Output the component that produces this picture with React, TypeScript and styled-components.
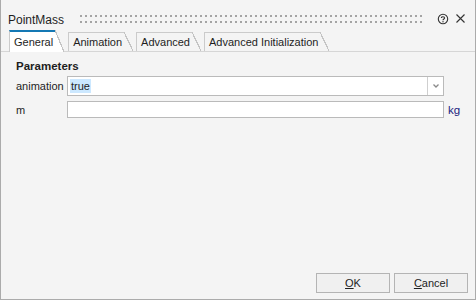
import React from "react";
import styled, { createGlobalStyle } from "styled-components";

const Global = createGlobalStyle`
  html, body { margin: 0; padding: 0; background: #f4f4f4; }
  body { font-family: "Liberation Sans", Arial, sans-serif; }
`;

const Window = styled.div`
  width: 476px;
  height: 300px;
  box-sizing: border-box;
  border-left: 1px solid #ababab;
  border-right: 1px solid #ababab;
  border-bottom: 1px solid #ababab;
  background: #f4f4f4;
  display: flex;
  flex-direction: column;
  font-size: 11px;
  color: #1e1e1e;
`;

const TitleBar = styled.div`
  height: 30px;
  display: flex;
  align-items: center;
  padding: 9px 8px 0 7px;
  box-sizing: border-box;
`;

const Title = styled.div`
  font-size: 12px;
  line-height: 14px;
  color: #1e1e1e;
  margin-right: 16px;
`;

const Grip = styled.div`
  flex: 1;
  height: 8px;
  margin-top: -2px;
  background-image: conic-gradient(from 270deg at 2px 2px, #a4a4a4 25%, transparent 0);
  background-size: 5px 6px;
  margin-right: 8px;
`;

const IconBtn = styled.div`
  width: 14px;
  height: 14px;
  display: flex;
  align-items: center;
  justify-content: center;
  margin-left: 3px;
  margin-top: -2px;
`;

const TabStrip = styled.div`
  display: flex;
  align-items: flex-end;
  height: 22px;
  padding-left: 8px;
  border-bottom: 1px solid #d6d6d6;
  box-sizing: border-box;
`;

const Tab = styled.div<{ $active?: boolean }>`
  position: relative;
  height: ${(p) => (p.$active ? 22 : 19)}px;
  box-sizing: border-box;
  padding: 0 2px 0 4px;
  margin-right: ${(p) => (p.$active ? 13 : 12)}px;
  margin-bottom: ${(p) => (p.$active ? -1 : 0)}px;
  display: flex;
  align-items: center;
  font-size: 11px;
  color: #1e1e1e;
  background: ${(p) => (p.$active ? "#ffffff" : "#f4f4f4")};
  border-left: 1px solid #cbcbcb;
  border-top: ${(p) => (p.$active ? "2px solid #1478b4" : "1px solid #cbcbcb")};
  z-index: ${(p) => (p.$active ? 2 : 1)};

  &::after {
    content: "";
    position: absolute;
    top: ${(p) => (p.$active ? -2 : -1)}px;
    right: -9px;
    width: 9px;
    height: calc(100% + ${(p) => (p.$active ? 2 : 1)}px);
    background: linear-gradient(
      to top right,
      ${(p) => (p.$active ? "#ffffff" : "#f4f4f4")} calc(50% - 0.6px),
      #c4c4c4 calc(50% - 0.6px),
      #c4c4c4 calc(50% + 0.6px),
      transparent calc(50% + 0.6px)
    );
  }
`;

const Body = styled.div`
  flex: 1;
  display: flex;
  flex-direction: column;
  padding: 8px 0 0 15px;
`;

const Section = styled.div`
  font-weight: bold;
  font-size: 11.5px;
  line-height: 13px;
  margin-bottom: 3px;
`;

const Row = styled.div<{ $h: number }>`
  display: flex;
  align-items: center;
  height: ${(p) => p.$h}px;
  margin-bottom: 5px;
`;

const Label = styled.div`
  width: 51px;
  font-size: 11px;
`;

const Field = styled.div<{ $h: number }>`
  width: 377px;
  height: ${(p) => p.$h}px;
  box-sizing: border-box;
  border: 1px solid #bababa;
  background: #fff;
  display: flex;
  align-items: center;
  padding-left: 2px;
`;

const Selected = styled.span`
  background: #cce8ff;
  padding: 0 1px;
  line-height: 14px;
`;

const Spacer = styled.div`
  flex: 1;
`;

const DropBtn = styled.div`
  width: 15px;
  height: 100%;
  border-left: 1px solid #cfcfcf;
  display: flex;
  align-items: center;
  justify-content: center;
`;

const Unit = styled.div`
  margin-left: 4px;
  color: #1a237e;
  font-size: 11.5px;
`;

const Footer = styled.div`
  display: flex;
  justify-content: flex-end;
  gap: 4px;
  padding: 0 7px 6px 0;
`;

const Button = styled.button`
  width: 74px;
  height: 20px;
  border: 1px solid #b4b4b4;
  background: #f0f0f0;
  font-family: inherit;
  font-size: 11px;
  color: #1e1e1e;
  padding: 0;
  display: flex;
  align-items: center;
  justify-content: center;
`;

const tabs = ["General", "Animation", "Advanced", "Advanced Initialization"];

export default function App() {
  return (
    <>
      <Global />
      <Window>
        <TitleBar>
          <Title>PointMass</Title>
          <Grip />
          <IconBtn>
            <svg width="12" height="12" viewBox="0 0 12 12">
              <circle cx="6" cy="6" r="4.7" fill="none" stroke="#333" strokeWidth="1.1" />
              <path d="M4.4 4.9 C4.4 3.4 7.6 3.4 7.6 4.9 C7.6 6 6 5.9 6 7.2" fill="none" stroke="#333" strokeWidth="1.1" />
              <circle cx="6" cy="8.7" r="0.7" fill="#333" />
            </svg>
          </IconBtn>
          <IconBtn>
            <svg width="11" height="11" viewBox="0 0 11 11">
              <path d="M1.5 1.5 L9.5 9.5 M9.5 1.5 L1.5 9.5" stroke="#333" strokeWidth="1.1" />
            </svg>
          </IconBtn>
        </TitleBar>
        <TabStrip>
          {tabs.map((t, i) => (
            <Tab key={t} $active={i === 0}>
              {t}
            </Tab>
          ))}
        </TabStrip>
        <Body>
          <Section>Parameters</Section>
          <Row $h={20}>
            <Label>animation</Label>
            <Field $h={20}>
              <Selected>true</Selected>
              <Spacer />
              <DropBtn>
                <svg width="8" height="6" viewBox="0 0 8 6">
                  <path d="M1.5 1.5 L4 4 L6.5 1.5" stroke="#8a8a8a" strokeWidth="1.3" fill="none" />
                </svg>
              </DropBtn>
            </Field>
          </Row>
          <Row $h={17}>
            <Label>m</Label>
            <Field $h={17} />
            <Unit>kg</Unit>
          </Row>
          <Spacer />
        </Body>
        <Footer>
          <Button>
            <u>O</u>K
          </Button>
          <Button>
            <u>C</u>ancel
          </Button>
        </Footer>
      </Window>
    </>
  );
}
